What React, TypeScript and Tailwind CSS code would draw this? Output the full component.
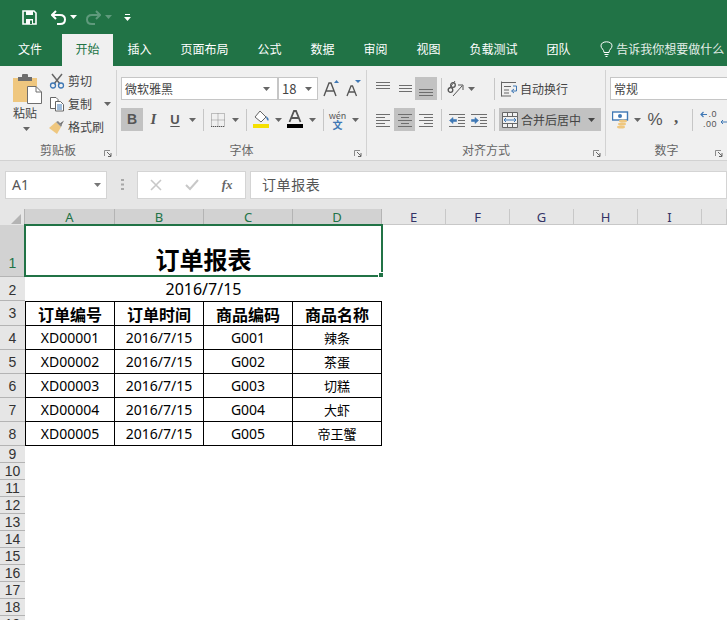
import React from "react";

const tabs = ["插入", "页面布局", "公式", "数据", "审阅", "视图", "负载测试", "团队"];
const rows = [
  ["XD00001", "G001", "辣条"],
  ["XD00002", "G002", "茶蛋"],
  ["XD00003", "G003", "切糕"],
  ["XD00004", "G004", "大虾"],
  ["XD00005", "G005", "帝王蟹"],
];
const font = "font-['Noto_Sans_CJK_SC',sans-serif]";

function Caret({ color = "#666666", className = "" }: { color?: string; className?: string }) {
  return (
    <svg width="7" height="4" viewBox="0 0 7 4" className={`shrink-0 ${className}`}>
      <path d="M0 0H7L3.5 4Z" fill={color} />
    </svg>
  );
}

function Btn({ w, on, children }: { w: string; on?: boolean; children?: React.ReactNode }) {
  return (
    <div className={`${w} h-[23px] shrink-0 flex items-center justify-center ${on ? "bg-[#c2c2c2]" : ""}`}>
      {children}
    </div>
  );
}

function VLine() {
  return <div className="w-px h-[22px] shrink-0 bg-[#c6c6c6]" />;
}

function GroupLine() {
  return <div className="w-px h-[86px] mt-1 shrink-0 bg-[#d2d2d2]" />;
}

function Launcher() {
  return (
    <svg width="8" height="7" viewBox="0 0 8 7" className="absolute right-[4px] top-[10px]">
      <path d="M0.5 6V0.5H6" fill="none" stroke="#8a8a8a" />
      <path d="M3 2L7 6M7 3V6.5H4" fill="none" stroke="#666666" />
    </svg>
  );
}

function GroupLabel({ text }: { text: string }) {
  return (
    <div className="relative mt-auto h-[20px] flex items-center justify-center text-[12px] text-[#666666]">
      {text}
      <Launcher />
    </div>
  );
}

function Lines({ d, blue }: { d: string; blue?: string }) {
  return (
    <svg width="16" height="16" viewBox="0 0 16 16">
      <path d={d} fill="none" stroke="#6e6e6e" />
      {blue && <path d={blue} fill="#3f78b5" stroke="#3f78b5" strokeWidth="0.6" />}
    </svg>
  );
}

function Clipboard() {
  return (
    <div className="w-[116px] shrink-0 flex flex-col">
      <div className="flex pt-[3px]">
        <div className="w-[49px] pl-[13px] pt-[5px] flex flex-col shrink-0">
          <svg width="29" height="30" viewBox="0 0 29 30">
            <path d="M0 4H24V28H0Z" fill="#efc77f" />
            <path d="M5 3H19V7H5Z" fill="#6e6e6e" />
            <path d="M9 1Q9 0 10 0H14Q15 0 15 1V4H9Z" fill="#6e6e6e" />
            <path d="M14.5 12.5H23L28.5 18V29.5H14.5Z" fill="#ffffff" stroke="#6e6e6e" />
            <path d="M23 12.5V18H28.5" fill="none" stroke="#6e6e6e" />
          </svg>
          <div className="text-[12px] leading-[16px] text-[#444444] mt-[1px] w-[24px]">粘贴</div>
          <Caret className="ml-[10px] mt-[6px]" />
        </div>
        <div className="flex flex-col text-[12px] text-[#444444]">
          <div className="h-[23px] flex items-center gap-[3px]">
            <svg width="16" height="16" viewBox="0 0 16 16">
              <path d="M3 1L11 11M13 1L5 11" fill="none" stroke="#666666" strokeWidth="1.5" />
              <circle cx="4" cy="12.5" r="2.5" fill="none" stroke="#3f78b5" strokeWidth="1.3" />
              <circle cx="12" cy="12.5" r="2.5" fill="none" stroke="#3f78b5" strokeWidth="1.3" />
            </svg>
            剪切
          </div>
          <div className="h-[23px] flex items-center gap-[3px]">
            <svg width="16" height="16" viewBox="0 0 16 16">
              <path d="M1.5 1.5H7L9 3.5V12.5H1.5Z" fill="#ffffff" stroke="#666666" />
              <path d="M6.5 5.5H11.5L14.5 8.5V15H6.5Z" fill="#ffffff" stroke="#666666" />
              <path d="M8 9H13M8 11H13M8 13H13" stroke="#3f78b5" />
            </svg>
            复制
            <Caret className="ml-[9px]" />
          </div>
          <div className="h-[23px] flex items-center gap-[3px]">
            <svg width="16" height="16" viewBox="0 0 16 16">
              <path d="M10 5L15 1.5L12 7Z" fill="#6e6e6e" />
              <path d="M0 9L7 3L12 8L8 15Q4 12 0 9Z" fill="#efc77f" />
              <path d="M7 3L12 8L13 6L9 2Z" fill="#8a8a8a" />
            </svg>
            格式刷
          </div>
        </div>
      </div>
      <GroupLabel text="剪贴板" />
    </div>
  );
}

function FontGroup() {
  return (
    <div className="w-[249px] shrink-0 flex flex-col">
      <div className="flex pt-[11px] pl-[4px]">
        <div className="w-[157px] h-[23px] bg-white border border-[#c6c6c6] flex items-center justify-between pl-[3px] pr-[7px] text-[12px] text-[#444444]">
          微软雅黑
          <Caret />
        </div>
        <div className="w-[40px] h-[23px] ml-[0px] bg-white border border-[#c6c6c6] flex items-center justify-between pl-[3px] pr-[5px] text-[13px] text-[#444444]">
          18
          <Caret />
        </div>
        <svg width="18" height="18" viewBox="0 0 18 18" className="ml-[5px] mt-[3px]">
          <path d="M1 16L6 3H8L13 16M3.5 11H10.5" fill="none" stroke="#555555" strokeWidth="1.4" />
          <path d="M11 3L13.5 0L16 3Z" fill="#3f78b5" />
        </svg>
        <svg width="16" height="18" viewBox="0 0 16 18" className="ml-[5px] mt-[3px]">
          <path d="M1 16L5 6H6.5L10.5 16M3 12H8.5" fill="none" stroke="#555555" strokeWidth="1.3" />
          <path d="M9 0H15L12 3Z" fill="#3f78b5" />
        </svg>
      </div>
      <div className="flex items-center pt-[8px] pl-[4px] text-[#555555]">
        <Btn w="w-[22px]" on>
          <span className="font-['Liberation_Sans',sans-serif] font-bold text-[14px]">B</span>
        </Btn>
        <Btn w="w-[21px]">
          <span className="font-['Liberation_Serif',serif] italic font-bold text-[15px]">I</span>
        </Btn>
        <Btn w="w-[22px]">
          <span className="font-['Liberation_Sans',sans-serif] font-bold text-[13px] underline underline-offset-2">U</span>
        </Btn>
        <Btn w="w-[13px]"><Caret /></Btn>
        <div className="w-[4px] shrink-0" />
        <VLine />
        <Btn w="w-[28px]">
          <svg width="14" height="14" viewBox="0 0 14 14">
            <path d="M0.5 0.5H13.5V13.5H0.5ZM7 0.5V13.5M0.5 7H13.5" fill="none" stroke="#8a8a8a" strokeDasharray="1 1" />
            <path d="M0 13.5H14" stroke="#555555" strokeDasharray="1 1" />
          </svg>
        </Btn>
        <Btn w="w-[7px]"><Caret /></Btn>
        <div className="w-[7px] shrink-0" />
        <VLine />
        <Btn w="w-[28px]">
          <svg width="17" height="19" viewBox="0 0 17 19">
            <path d="M7 1L13 7L8 12L2 7Z" fill="#ffffff" stroke="#666666" />
            <path d="M13 6Q17 9 15 11Q13 9 13 6Z" fill="#3f78b5" />
            <rect x="0" y="14" width="16" height="4" fill="#f5e000" />
          </svg>
        </Btn>
        <Btn w="w-[6px]"><Caret /></Btn>
        <Btn w="w-[28px]">
          <svg width="16" height="19" viewBox="0 0 16 19">
            <path d="M2.5 12L7 1H9L13.5 12M4.5 8H11.5" fill="none" stroke="#555555" strokeWidth="1.8" />
            <rect x="0" y="14" width="16" height="4" fill="#000000" />
          </svg>
        </Btn>
        <Btn w="w-[6px]"><Caret /></Btn>
        <div className="w-[8px] shrink-0" />
        <VLine />
        <Btn w="w-[27px]">
          <div className="flex flex-col items-center leading-[9px]">
            <span className="text-[9px] text-[#555555]">wén</span>
            <span className="text-[10px] font-bold text-[#3f78b5]">文</span>
          </div>
        </Btn>
        <Btn w="w-[8px]"><Caret /></Btn>
      </div>
      <GroupLabel text="字体" />
    </div>
  );
}

function AlignGroup() {
  return (
    <div className="w-[238px] shrink-0 flex flex-col">
      <div className="flex items-center pt-[11px] pl-[5px]">
        <Btn w="w-[22px]"><Lines d="M1 1.5H15M1 4.5H15M1 7.5H15" /></Btn>
        <Btn w="w-[21px]"><Lines d="M2 4.5H15M2 7.5H15M2 10.5H15" /></Btn>
        <Btn w="w-[22px]" on><Lines d="M1 8.5H15M1 11.5H15M1 14.5H15" /></Btn>
        <div className="w-[4px] shrink-0" />
        <VLine />
        <Btn w="w-[26px]">
          <svg width="17" height="17" viewBox="0 0 17 17">
            <path d="M1 10L8 1" stroke="#666666" />
            <circle cx="6" cy="5" r="2.3" fill="none" stroke="#555555" strokeWidth="1.3" />
            <circle cx="3.5" cy="10" r="2.3" fill="none" stroke="#555555" strokeWidth="1.3" />
            <path d="M6 16L15 6M11 5H16V10" fill="none" stroke="#555555" />
          </svg>
        </Btn>
        <Btn w="w-[7px]"><Caret /></Btn>
        <div className="w-[19px] shrink-0" />
        <VLine />
        <div className="pl-[6px] flex items-center gap-[3px] text-[12px] text-[#444444] h-[23px]">
          <svg width="16" height="16" viewBox="0 0 16 16">
            <path d="M0.5 15.5V0.5" stroke="#666666" />
            <path d="M0.5 1.5H15M0.5 15H10M3 5.5H10M3 9H8M3 12H8" fill="none" stroke="#666666" />
            <path d="M12 5H15.5V10H11M13 8L10.5 10L13 12" fill="none" stroke="#3f78b5" />
          </svg>
          自动换行
        </div>
      </div>
      <div className="flex items-center pt-[8px] pl-[5px]">
        <Btn w="w-[22px]"><Lines d="M1 2.5H15M1 5.5H10M1 8.5H15M1 11.5H10M1 14.5H15" /></Btn>
        <Btn w="w-[21px]" on><Lines d="M1 2.5H15M4 5.5H12M1 8.5H15M4 11.5H12M1 14.5H15" /></Btn>
        <Btn w="w-[22px]"><Lines d="M1 2.5H15M6 5.5H15M1 8.5H15M6 11.5H15M1 14.5H15" /></Btn>
        <div className="w-[4px] shrink-0" />
        <VLine />
        <Btn w="w-[30px]">
          <Lines d="M0 2.5H16M9 5.5H16M9 8.5H16M9 11.5H16M0 14.5H16" blue="M0.5 8.5L4 5.5V7.5H7.5V9.5H4V11.5Z" />
        </Btn>
        <Btn w="w-[14px]">
          <div className="w-[16px] shrink-0">
            <Lines d="M0 2.5H16M9 5.5H16M9 8.5H16M9 11.5H16M0 14.5H16" blue="M7.5 8.5L4 5.5V7.5H0.5V9.5H4V11.5Z" />
          </div>
        </Btn>
        <div className="w-[8px] shrink-0" />
        <VLine />
        <div className="w-[4px] shrink-0" />
        <div className="w-[102px] h-[23px] bg-[#c2c2c2] flex items-center pl-[3px] text-[12px] text-[#444444] shrink-0">
          <svg width="16" height="16" viewBox="0 0 16 16" className="mr-[3px]">
            <path d="M0.5 0.5H15.5V15.5H0.5ZM0.5 4.5H15.5M0.5 11.5H15.5M5.5 0.5V4.5M10.5 0.5V4.5M5.5 11.5V15.5M10.5 11.5V15.5" fill="#f0f0f0" stroke="#666666" />
            <path d="M2 8H14M4 6L2 8L4 10M12 6L14 8L12 10" fill="none" stroke="#3f78b5" />
          </svg>
          合并后居中
          <Caret color="#444444" className="ml-[7px]" />
        </div>
      </div>
      <GroupLabel text="对齐方式" />
    </div>
  );
}

function NumberGroup() {
  return (
    <div className="w-[121px] shrink-0 flex flex-col">
      <div className="pt-[11px] pl-[4px]">
        <div className="w-[130px] h-[23px] bg-white border border-[#c6c6c6] flex items-center pl-[3px] text-[12px] text-[#444444]">
          常规
        </div>
      </div>
      <div className="flex items-center pt-[8px]">
        <Btn w="w-[28px]">
          <svg width="17" height="18" viewBox="0 0 17 18">
            <rect x="0.5" y="1" width="15" height="8" fill="#ffffff" stroke="#3f78b5" strokeWidth="1.4" />
            <circle cx="8" cy="5" r="2" fill="#3f78b5" />
            <ellipse cx="11" cy="10" rx="4" ry="1.5" fill="#efc77f" />
            <ellipse cx="10" cy="13" rx="4" ry="1.5" fill="#efc77f" />
            <ellipse cx="9" cy="16" rx="4" ry="1.5" fill="#efc77f" />
          </svg>
        </Btn>
        <Btn w="w-[7px]"><Caret /></Btn>
        <Btn w="w-[28px]">
          <span className="font-['Liberation_Sans',sans-serif] text-[17px] text-[#555555]">%</span>
        </Btn>
        <Btn w="w-[14px]">
          <span className="font-['Liberation_Serif',serif] font-bold text-[17px] leading-none text-[#555555] -mt-[4px]">,</span>
        </Btn>
        <div className="w-[9px] shrink-0" />
        <VLine />
        <div className="w-[7px] shrink-0" />
        <div className="w-[21px] h-[23px] shrink-0 relative font-['Liberation_Sans',sans-serif] text-[9px] leading-[9px] text-[#555555] tracking-[0.5px]">
          <svg width="7" height="7" viewBox="0 0 7 7" className="absolute left-0 top-[3px]">
            <path d="M7 3.5H1M3.5 1L1 3.5L3.5 6" fill="none" stroke="#3f78b5" strokeWidth="1.2" />
          </svg>
          <div className="text-right pr-[4px] pt-[2px]">.0</div>
          <div className="text-right pr-[4px] pt-[1px]">.00</div>
        </div>
        <svg width="8" height="12" viewBox="0 0 8 12" className="-ml-[1px] mt-[6px] shrink-0">
          <path d="M8 5H1M3 3L1 5L3 7" fill="none" stroke="#3f78b5" />
        </svg>
      </div>
      <GroupLabel text="数字" />
    </div>
  );
}

function Ribbon() {
  return (
    <div className="h-[95px] bg-[#f0f0f0] border-b border-[#d2d2d2] flex overflow-hidden">
      <Clipboard />
      <GroupLine />
      <FontGroup />
      <GroupLine />
      <AlignGroup />
      <GroupLine />
      <NumberGroup />
    </div>
  );
}

function TitleBar() {
  return (
    <div className="h-[34px] bg-[#217346] flex items-center pl-[22px]">
      <svg width="15" height="15" viewBox="0 0 15 15">
        <path d="M1 1H12L14 3V14H1Z" fill="none" stroke="#ffffff" strokeWidth="1.6" />
        <path d="M4 1H11V5H4Z" fill="#ffffff" />
        <path d="M4 9H11V14H4Z" fill="#ffffff" />
        <path d="M8 10.5H10V14H8Z" fill="#217346" />
      </svg>
      <svg width="15" height="15" viewBox="0 0 15 15" className="ml-[14px]">
        <path d="M5 1L1 5L5 9M1 5H9Q14 5 14 9.5Q14 14 9 14H6" fill="none" stroke="#ffffff" strokeWidth="2" />
      </svg>
      <Caret color="#ffffff" className="ml-[4px]" />
      <svg width="15" height="15" viewBox="0 0 15 15" className="ml-[9px]">
        <path d="M10 1L14 5L10 9M14 5H6Q1 5 1 9.5Q1 14 6 14H9" fill="none" stroke="#5f9a7c" strokeWidth="2" />
      </svg>
      <Caret color="#5f9a7c" className="ml-[4px]" />
      <svg width="7" height="7" viewBox="0 0 7 7" className="ml-[12px]">
        <path d="M1 0.5H6" stroke="#ffffff" />
        <path d="M0 3H7L3.5 7Z" fill="#ffffff" />
      </svg>
    </div>
  );
}

function TabBar() {
  return (
    <div className="h-[32px] bg-[#217346] flex text-[12px] text-white">
      <div className="w-[62px] pl-[18px] pb-[3px] flex items-center">文件</div>
      <div className="w-[51px] pb-[2px] bg-[#f0f0f0] text-[#217346] flex items-center justify-center">开始</div>
      {tabs.map((t) => (
        <div key={t} className="px-[14.5px] pb-[2px] flex items-center">{t}</div>
      ))}
      <div className="ml-[15px] pb-[2px] flex items-center gap-[3px] whitespace-nowrap text-[#e3eee8]">
        <svg width="13" height="16" viewBox="0 0 13 16">
          <path d="M4 11.5Q4 9.5 2.5 8Q1 6.5 1 4.8Q1.2 1 6.5 0.8Q11.8 1 12 4.8Q12 6.5 10.5 8Q9 9.5 9 11.5Z" fill="none" stroke="#ffffff" />
          <path d="M4.5 13.5H8.5M5.5 15.5H7.5" stroke="#ffffff" />
        </svg>
        告诉我你想要做什么
      </div>
    </div>
  );
}

function FormulaBar() {
  return (
    <div className="h-[48px] bg-[#e6e6e6] flex items-start pt-[10px] pl-[5px]">
      <div className="w-[102px] h-[28px] bg-white border border-[#d4d4d4] flex items-center justify-between pl-[6px] pr-[5px] pb-[1px] font-['Noto_Sans',sans-serif] text-[14px] text-[#555555]">
        A1
        <Caret color="#777777" />
      </div>
      <div className="w-[30px] h-[28px] flex items-center justify-center">
        <svg width="3" height="12" viewBox="0 0 3 12">
          <path d="M0 1H3M0 5.5H3M0 10H3" stroke="#a8a8a8" strokeWidth="2" />
        </svg>
      </div>
      <div className="w-[109px] h-[28px] bg-white border border-[#d4d4d4] flex items-center">
        <div className="w-[36px] flex justify-center">
          <svg width="12" height="12" viewBox="0 0 12 12">
            <path d="M1 1L11 11M11 1L1 11" stroke="#c8c8c8" strokeWidth="1.6" />
          </svg>
        </div>
        <div className="w-[36px] flex justify-center">
          <svg width="14" height="12" viewBox="0 0 14 12">
            <path d="M1 6L5 10L13 1" fill="none" stroke="#c8c8c8" strokeWidth="2" />
          </svg>
        </div>
        <div className="w-[36px] text-center font-['Liberation_Serif',serif] italic font-bold text-[13px] text-[#666666]">
          fx
        </div>
      </div>
      <div className="flex-1 ml-[4px] h-[28px] bg-white border border-[#d4d4d4] flex items-center pl-[11px] pb-[1px] text-[14px] tracking-[0.6px] text-[#555555]">
        订单报表
      </div>
    </div>
  );
}

function RowHead({ n, on, extra = "" }: { n: number; on?: boolean; extra?: string }) {
  return (
    <div
      className={`flex items-center justify-center border-b border-[#b4b4b4] font-['Liberation_Sans',sans-serif] text-[14px] leading-[16px] ${extra} ${
        on ? "bg-[#d2d2d2] text-[#217346]" : "bg-[#e6e6e6] text-[#333333]"
      }`}
    >
      {n}
    </div>
  );
}

function Cell({ first, top, bold, cjk, children }: { first?: boolean; top?: boolean; bold?: boolean; cjk?: boolean; children: React.ReactNode }) {
  return (
    <div
      className={`flex items-center justify-center border-r border-b border-black text-black ${first ? "border-l" : ""} ${top ? "border-t" : ""} ${
        bold ? "font-bold text-[16px]" : cjk ? "text-[13px]" : "font-['Noto_Sans',sans-serif] text-[14px]"
      }`}
    >
      {children}
    </div>
  );
}

function Sheet() {
  const empties = [9, 10, 11, 12, 13, 14, 15, 16, 17, 18, 19];
  return (
    <div className="grid grid-cols-[25px_90px_89px_89px_89px_64px_64px_64px_64px_64px_25px] grid-rows-[16px_52px_24px_25px_24px_24px_24px_24px_24px_repeat(11,17px)] bg-white">
      <div className="bg-[#e6e6e6] border-r border-[#b4b4b4] flex items-end justify-end pr-[3px] pb-[1px]">
        <svg width="10" height="10" viewBox="0 0 10 10">
          <path d="M10 0V10H0Z" fill="#b4b4b4" />
        </svg>
      </div>
      {["A", "B", "C", "D"].map((c) => (
        <div key={c} className="bg-[#d2d2d2] border-r border-[#b4b4b4] flex items-start justify-center font-['Noto_Sans',sans-serif] text-[13px] leading-[16px] text-[#217346]">
          {c}
        </div>
      ))}
      {["E", "F", "G", "H", "I", ""].map((c) => (
        <div key={c} className="bg-[#e6e6e6] border-r border-b border-[#c8c8c8] flex items-start justify-center font-['Noto_Sans',sans-serif] text-[13px] leading-[16px] text-[#333366]">
          {c}
        </div>
      ))}

      <RowHead n={1} on extra="!items-end pb-[5px]" />
      <div className="col-span-4 relative -mt-px -ml-px -mr-px border-2 border-[#217346] flex items-end justify-center pb-[1px] text-[24px] leading-[30px] font-bold text-black">
        订单报表
        <div className="absolute -right-[3px] -bottom-[3px] w-[6px] h-[6px] bg-[#217346] border border-white" />
      </div>
      <div className="col-span-6" />

      <RowHead n={2} extra="pt-[3px]" />
      <div className="col-span-4 flex items-center justify-center font-['Noto_Sans',sans-serif] text-[16px] text-black">2016/7/15</div>
      <div className="col-span-6" />

      <RowHead n={3} />
      {["订单编号", "订单时间", "商品编码", "商品名称"].map((h, i) => (
        <Cell key={h} first={i === 0} top bold>{h}</Cell>
      ))}
      <div className="col-span-6" />

      {rows.map((r, i) => (
        <React.Fragment key={r[0]}>
          <RowHead n={i + 4} />
          <Cell first>{r[0]}</Cell>
          <Cell>2016/7/15</Cell>
          <Cell>{r[1]}</Cell>
          <Cell cjk>{r[2]}</Cell>
          <div className="col-span-6" />
        </React.Fragment>
      ))}

      {empties.map((n) => (
        <React.Fragment key={n}>
          <RowHead n={n} />
          <div className="col-span-10" />
        </React.Fragment>
      ))}
    </div>
  );
}

export default function App() {
  return (
    <div className={`w-[727px] h-[620px] overflow-hidden bg-white ${font}`}>
      <TitleBar />
      <TabBar />
      <Ribbon />
      <FormulaBar />
      <Sheet />
    </div>
  );
}
